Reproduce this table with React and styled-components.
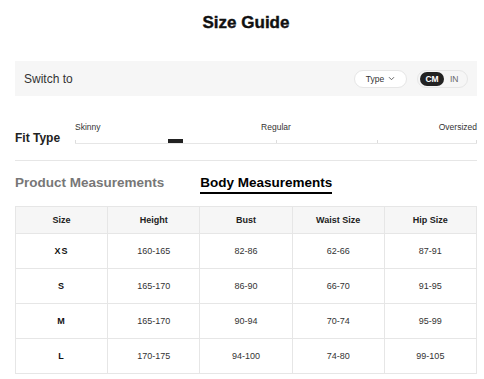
import styled, { createGlobalStyle } from "styled-components";

const GlobalStyle = createGlobalStyle`
    body{
        margin:0;
        background:#fff;
        font-family:"Liberation Sans", Arial, sans-serif;
        color:#222;
    }
`;
const Page = styled.div`
    padding: 13px 7px 6px 15px;
`;
const Title = styled.h1`
    margin:0;
    text-align:center;
    font-size:17px;
    line-height:20px;
    font-weight:bold;
    color:#111;
    -webkit-text-stroke:0.4px #111;
`;
const SwitchBar = styled.div`
    margin-top:28px;
    height:35px;
    background:#f6f6f6;
    display:flex;
    align-items:center;
    padding:0 9px;
`;
const SwitchLabel = styled.span`
    font-size:12px;
    color:#333;
    flex:1;
`;
const Pill = styled.div`
    height:18px;
    box-sizing:border-box;
    border:1px solid #e6e6e6;
    border-radius:10px;
    display:flex;
    align-items:center;
    font-size:8.5px;
    color:#333;
`;
const TypePill = styled(Pill)`
    width:53px;
    background:#fff;
    justify-content:center;
    gap:4px;
    margin-right:10px;
`;
const UnitToggle = styled(Pill)`
    width:51px;
    padding:0 2px;
    gap:6px;
`;
const Unit = styled.span`
    height:14px;
    line-height:14px;
    border-radius:7px;
    padding:0 ${p => p.active ? "4px" : "0"};
    width:${p => p.active ? "24px" : "auto"};
    box-sizing:border-box;
    text-align:center;
    background:${p => p.active ? "#222" : "transparent"};
    color:${p => p.active ? "#fff" : "#666"};
    font-weight:${p => p.active ? "bold" : "normal"};
`;
const FitRow = styled.div`
    margin-top:26px;
    display:flex;
    align-items:flex-end;
    padding-bottom:16px;
    border-bottom:1px solid #e6e6e6;
`;
const FitLabel = styled.div`
    width:60px;
    font-size:12px;
    line-height:14px;
    font-weight:bold;
    color:#222;
    margin-bottom:-1px;
`;
const Scale = styled.div`
    flex:1;
    position:relative;
    height:21px;
    border-bottom:1px solid #e6e6e6;
`;
const ScaleLabel = styled.span`
    position:absolute;
    top:0;
    left:${p => p.at}%;
    transform:translateX(${p => p.shift}%);
    font-size:8.5px;
    line-height:10px;
    color:#333;
    white-space:nowrap;
`;
const Tick = styled.span`
    position:absolute;
    bottom:0;
    left:${p => p.at}%;
    width:1px;
    height:3px;
    background:#ddd;
    transform:translateX(${p => p.at === 100 ? "-1px" : "0"});
`;
const Marker = styled.span`
    position:absolute;
    bottom:0;
    left:23.2%;
    width:15px;
    height:4px;
    background:#222;
`;
const Tabs = styled.div`
    margin-top:14px;
    display:flex;
    gap:36px;
`;
const Tab = styled.div`
    font-size:13.5px;
    line-height:16px;
    font-weight:bold;
    color:${p => p.active ? "#000" : "#777"};
    padding-bottom:1px;
    border-bottom:2px solid ${p => p.active ? "#000" : "transparent"};
`;
const Table = styled.table`
    margin-top:12px;
    width:100%;
    border-collapse:collapse;
    table-layout:fixed;
    font-size:9px;
    border:1px solid #e6e6e6;
    th, td{
        border:1px solid #e6e6e6;
        text-align:center;
        padding:0;
    }
    th{
        height:26px;
        background:#f6f6f6;
        font-weight:bold;
        color:#222;
    }
    td{
        height:34px;
        color:#333;
    }
    td:first-child{
        font-weight:bold;
        color:#111;
        letter-spacing:1px;
    }
`;

const rows = [
    ["XS", "160-165", "82-86", "62-66", "87-91"],
    ["S", "165-170", "86-90", "66-70", "91-95"],
    ["M", "165-170", "90-94", "70-74", "95-99"],
    ["L", "170-175", "94-100", "74-80", "99-105"],
];

export default function App(){
    return (
    <Page>
        <GlobalStyle/>
        <Title>Size Guide</Title>
        <SwitchBar>
            <SwitchLabel>Switch to</SwitchLabel>
            <TypePill>
                Type
                <svg width="7" height="5" viewBox="0 0 7 5" fill="none" stroke="#555" strokeWidth="0.9">
                    <path d="M1 1.2l2.5 2.5L6 1.2"/>
                </svg>
            </TypePill>
            <UnitToggle>
                <Unit active>CM</Unit>
                <Unit>IN</Unit>
            </UnitToggle>
        </SwitchBar>
        <FitRow>
            <FitLabel>Fit Type</FitLabel>
            <Scale>
                <ScaleLabel at={0} shift={0}>Skinny</ScaleLabel>
                <ScaleLabel at={50} shift={-50}>Regular</ScaleLabel>
                <ScaleLabel at={100} shift={-100}>Oversized</ScaleLabel>
                <Tick at={0}/>
                <Tick at={50}/>
                <Tick at={75}/>
                <Tick at={100}/>
                <Marker/>
            </Scale>
        </FitRow>
        <Tabs>
            <Tab>Product Measurements</Tab>
            <Tab active>Body Measurements</Tab>
        </Tabs>
        <Table>
            <thead>
                <tr>
                    <th>Size</th>
                    <th>Height</th>
                    <th>Bust</th>
                    <th>Waist Size</th>
                    <th>Hip Size</th>
                </tr>
            </thead>
            <tbody>
                {rows.map(r => (
                    <tr key={r[0]}>
                        {r.map((c, i) => <td key={i}>{c}</td>)}
                    </tr>
                ))}
            </tbody>
        </Table>
    </Page>
    );
}
